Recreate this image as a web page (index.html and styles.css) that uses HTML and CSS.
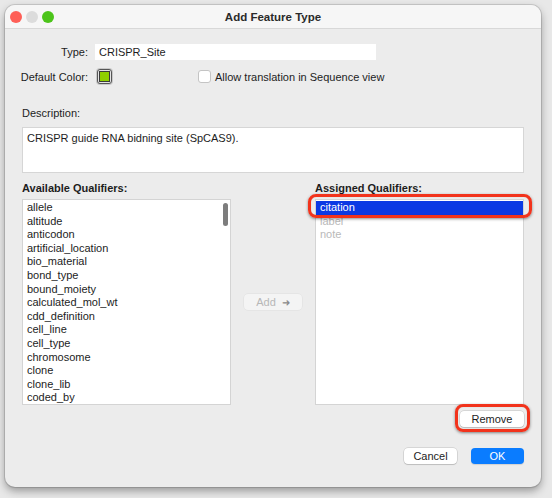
FILE: index.html
```html
<!DOCTYPE html>
<html lang="en">
<head>
  <meta charset="UTF-8" />
  <title>Add Feature Type</title>
  <link rel="stylesheet" href="styles.css">
</head>
<body>
  <div class="window">
    <div class="titlebar">
      <div class="lights">
        <span class="light red"></span>
        <span class="light off"></span>
        <span class="light green"></span>
      </div>
      <div class="title">Add Feature Type</div>
    </div>

    <div class="content">
      <div class="field-row">
        <span class="field-label">Type:</span>
        <div class="text-input">CRISPR_Site</div>
      </div>
      <div class="field-row color-row">
        <span class="field-label">Default Color:</span>
        <div class="swatch"><span class="swatch-fill"></span></div>
        <label class="check"><span class="check-box"></span>Allow translation in Sequence view</label>
      </div>

      <div class="section-label">Description:</div>
      <div class="textarea">CRISPR guide RNA bidning site (SpCAS9).</div>

      <div class="qualifiers">
        <div class="qual-title">Available Qualifiers:</div>
        <div></div>
        <div class="qual-title">Assigned Qualifiers:</div>

        <div class="listbox">
          <div class="item">allele</div>
          <div class="item">altitude</div>
          <div class="item">anticodon</div>
          <div class="item">artificial_location</div>
          <div class="item">bio_material</div>
          <div class="item">bond_type</div>
          <div class="item">bound_moiety</div>
          <div class="item">calculated_mol_wt</div>
          <div class="item">cdd_definition</div>
          <div class="item">cell_line</div>
          <div class="item">cell_type</div>
          <div class="item">chromosome</div>
          <div class="item">clone</div>
          <div class="item">clone_lib</div>
          <div class="item">coded_by</div>
          <div class="scroll-thumb"></div>
        </div>

        <div class="mid">
          <button class="btn add" disabled>Add <span class="arrow">&#10140;</span></button>
        </div>

        <div class="listbox assigned">
          <div class="item selected">citation</div>
          <div class="item muted">label</div>
          <div class="item muted">note</div>
          <div class="callout row-callout"></div>
        </div>
      </div>

      <div class="remove-row">
        <div class="callout-wrap">
          <button class="btn remove">Remove</button>
          <div class="callout btn-callout"></div>
        </div>
      </div>

      <div class="dialog-buttons">
        <button class="btn">Cancel</button>
        <button class="btn primary">OK</button>
      </div>
    </div>
  </div>
</body>
</html>
```

FILE: styles.css
```css
body {
  margin: 0;
  padding: 5px 11px 11px 5px;
  background: #e8e8e8;
  font-family: "Liberation Sans", Arial, sans-serif;
  font-size: 11px;
  color: #1d1d1d;
}
.window {
  width: 536px;
  height: 482px;
  background: #ececec;
  border-radius: 10px;
  box-shadow: 0 0 0 1px rgba(0, 0, 0, 0.12), 0 4px 9px rgba(0, 0, 0, 0.35);
  overflow: hidden;
}
.titlebar {
  height: 23px;
  background: #f6f6f6;
  border-bottom: 1px solid #d8d8d8;
  display: flex;
  align-items: center;
  position: relative;
}
.lights {
  display: flex;
  gap: 4px;
  padding-left: 5px;
}
.light {
  width: 12px;
  height: 12px;
  border-radius: 50%;
}
.light.red { background: #fe5f57; }
.light.off { background: #dcdcdc; }
.light.green { background: #4cc41a; }
.title {
  position: absolute;
  left: 0;
  right: 0;
  text-align: center;
  font-weight: bold;
  font-size: 11.5px;
  color: #2a2a2a;
}
.content {
  padding: 15px 17px 0 12px;
}
.field-row {
  display: flex;
  align-items: center;
  height: 16px;
}
.color-row {
  margin-top: 9px;
  height: 15px;
}
.field-label {
  width: 71px;
  text-align: right;
  white-space: nowrap;
  margin-right: 9px;
  flex-shrink: 0;
}
.text-input {
  width: 277px;
  height: 16px;
  line-height: 16px;
  background: #fff;
  padding-left: 4px;
  margin-left: -2px;
}
.swatch {
  width: 11px;
  height: 11px;
  border: 1px solid #555;
  border-radius: 3px;
  padding: 1px;
  background: #e4e4e4;
  box-shadow: 0 0 0 1px #c9c9c9;
  display: flex;
}
.swatch-fill {
  flex: 1;
  background: #8fd000;
  border: 1px solid #3a3a3a;
}
.check {
  display: flex;
  align-items: center;
  margin-left: 86px;
}
.check-box {
  width: 11px;
  height: 11px;
  background: #fff;
  border: 1px solid #c4c4c4;
  border-radius: 3px;
  margin-right: 4px;
}
.section-label {
  margin-top: 22px;
  margin-left: 5px;
  line-height: 14px;
}
.textarea {
  margin: 7px 0 0 5px;
  height: 46px;
  box-sizing: border-box;
  background: #fff;
  border: 1px solid #d6d6d6;
  padding: 4px 4px;
}
.qualifiers {
  display: grid;
  grid-template-columns: 209px 84px 209px;
  grid-template-rows: 14px 206px;
  row-gap: 4px;
  margin: 8px 0 0 5px;
}
.qual-title {
  font-weight: bold;
  line-height: 14px;
}
.listbox {
  background: #fff;
  border: 1px solid #d4d4d4;
  position: relative;
  padding-top: 1px;
  box-sizing: border-box;
}
.item {
  height: 13.6px;
  line-height: 13.6px;
  padding-left: 4px;
}
.item.selected {
  background: #0b39e4;
  color: #fff;
}
.item.muted {
  color: #b9b9b9;
}
.scroll-thumb {
  position: absolute;
  right: 2px;
  top: 3px;
  width: 5px;
  height: 23px;
  border-radius: 3px;
  background: #7d7d7d;
}
.mid {
  display: flex;
  align-items: center;
  justify-content: center;
}
.btn {
  font-family: inherit;
  font-size: 11px;
  height: 16px;
  padding: 0;
  background: #fff;
  color: #1d1d1d;
  border: none;
  border-radius: 4px;
  box-shadow: 0 0 0 0.5px rgba(0, 0, 0, 0.18), 0 1px 1px rgba(0, 0, 0, 0.12);
}
.btn.add {
  width: 58px;
  background: #f4f4f4;
  color: #b7b7b7;
  box-shadow: 0 0 0 0.5px rgba(0, 0, 0, 0.06);
}
.arrow {
  color: #8a8a8a;
  font-size: 10px;
  margin-left: 3px;
}
.remove-row {
  display: flex;
  justify-content: flex-end;
  margin-top: 6px;
}
.callout-wrap {
  position: relative;
}
.btn.remove {
  width: 64px;
  display: block;
}
.callout {
  position: absolute;
  border: 3px solid #f2331c;
  border-radius: 8px;
  box-shadow: 0 1px 3px rgba(0, 0, 0, 0.45), inset 0 0 1px rgba(0, 0, 0, 0.2);
}
.row-callout {
  left: -8px;
  top: -6px;
  width: 218px;
  height: 18px;
}
.btn-callout {
  left: -5px;
  right: -6px;
  top: -7px;
  bottom: -5px;
}
.dialog-buttons {
  display: flex;
  justify-content: flex-end;
  gap: 14px;
  margin-top: 21px;
}
.dialog-buttons .btn {
  width: 53px;
}
.btn.primary {
  background: #0a7cff;
  color: #fff;
  box-shadow: 0 1px 1px rgba(0, 0, 0, 0.12);
}
```
